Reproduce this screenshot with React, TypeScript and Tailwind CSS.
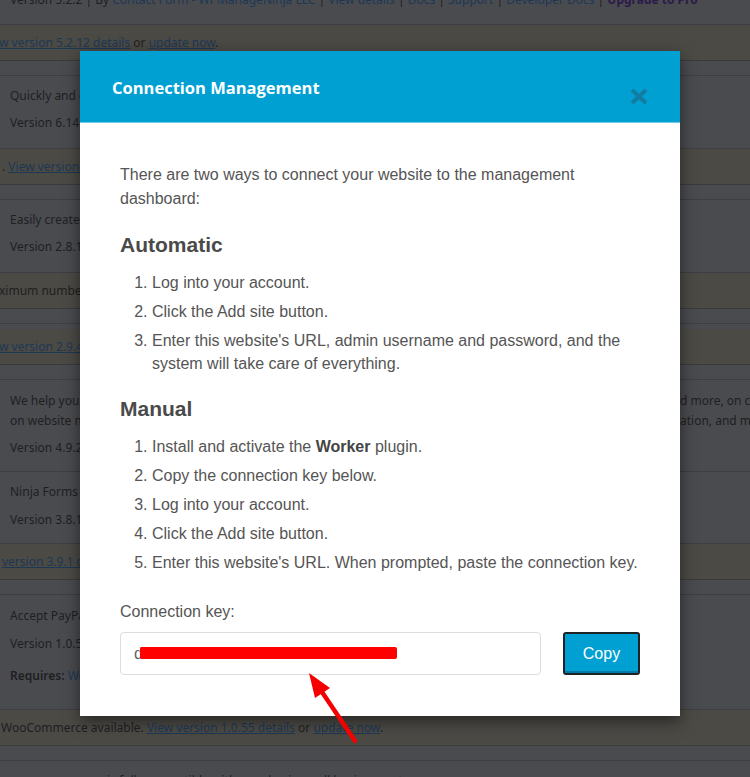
import React from "react";

const linkText = "text-[#1c3855] underline";

function Notice({ children }: { children: React.ReactNode }) {
  return (
    <div className="flex h-[36px] items-center overflow-hidden whitespace-nowrap border-b border-[#3b3b3d] bg-[#4c4a45] text-[#1e1f22]">
      {children}
    </div>
  );
}

function Strip() {
  return <div className="h-[15px] border-b border-[#3d3e41]" />;
}

function PluginRow({
  lines,
  className = "",
}: {
  lines: React.ReactNode[];
  className?: string;
}) {
  return (
    <div className={`border-b border-[#3d3e41] pl-[10px] pt-[10px] ${className}`}>
      {lines.map((line, i) => (
        <div key={i} className="whitespace-nowrap leading-[20px]">
          {line}
        </div>
      ))}
    </div>
  );
}

function CloseIcon() {
  return (
    <svg width="18" height="17" viewBox="0 0 18 17">
      <path d="M2 2 L16 15 M16 2 L2 15" stroke="#137ca3" strokeWidth="4" strokeLinecap="butt" />
    </svg>
  );
}

export default function App() {
  return (
    <div className="relative h-[777px] w-[750px] overflow-hidden bg-[#4a4b4f] font-['Noto_Sans',sans-serif] text-[12px] text-[#1e1f22]">
      {/* dimmed plugin list behind the dialog */}
      <div className="flex flex-col">
        <div className="h-[25px] overflow-hidden whitespace-nowrap border-b border-[#3d3e41] pl-[10px]">
          <div className="-mt-[10px] leading-[20px]">
            Version 5.2.2 | By <span className="text-[#1c3855]">Contact Form - WPManageNinja LLC</span> |{" "}
            <span className="text-[#1c3855]">View details</span> | <span className="text-[#1c3855]">Docs</span> |{" "}
            <span className="text-[#1c3855]">Support</span> | <span className="text-[#1c3855]">Developer Docs</span> |{" "}
            <span className="font-bold text-[#2c1b4a]">Upgrade to Pro</span>
          </div>
        </div>
        <Notice>
          <span className="-ml-[1px]">
            <span className={linkText}>w version 5.2.12 details</span> or <span className={linkText}>update now</span>.
          </span>
        </Notice>
        <Strip />
        <PluginRow
          className="h-[73px]"
          lines={[
            "Quickly and easily create forms with drag and drop builder",
            <span className="mt-[7px] block">Version 6.14 | By Developer | View details</span>,
          ]}
        />
        <Notice>
          <span className="ml-[2px]">
            . <span className={linkText}>View version 6.15 details</span> or <span className={linkText}>update now</span>.
          </span>
        </Notice>
        <Strip />
        <PluginRow
          className="h-[73px]"
          lines={[
            "Easily create tables and charts for your posts",
            <span className="mt-[7px] block">Version 2.8.1 | By Developer | View details</span>,
          ]}
        />
        <Notice>
          <span className="-ml-[1px]">ximum number of sites allowed by your license.</span>
        </Notice>
        <Strip />
        <div className="h-[5px]" />
        <Notice>
          <span className="-ml-[1px]">
            <span className={linkText}>w version 2.9.4 details</span> or <span className={linkText}>update now</span>.
          </span>
        </Notice>
        <Strip />
        <div className="h-[92px] border-b border-[#3d3e41] pl-[10px] pt-[11px]">
          <div className="grid grid-cols-[670px_1fr] whitespace-nowrap leading-[20px]">
            <span className="overflow-hidden">We help you keep your site safe with backups</span>
            <span>d more, on cloud storage of your choice</span>
            <span className="overflow-hidden">on website migration</span>
            <span>ation, and more.</span>
          </div>
          <div className="mt-[7px] leading-[20px]">Version 4.9.2 | By Developer</div>
        </div>
        <PluginRow
          className="h-[72px]"
          lines={[
            "Ninja Forms is a webform builder with unparalleled ease of use",
            <span className="mt-[8px] block">Version 3.8.1 | By Saturday Drive</span>,
          ]}
        />
        <Notice>
          <span className="ml-[2px]">
            <span className={linkText}>version 3.9.1 details</span> or <span className={linkText}>update now</span>.
          </span>
        </Notice>
        <Strip />
        <div className="h-[115px] border-b border-[#3d3e41] pl-[10px] pt-[11px] leading-[20px]">
          <div className="whitespace-nowrap">Accept PayPal payments on your store</div>
          <div className="mt-[8px] whitespace-nowrap">Version 1.0.5 | By Developer</div>
          <div className="mt-[12px] whitespace-nowrap">
            <span className="font-semibold">Requires:</span> <span className="text-[#1c3855]">WooCommerce</span>
          </div>
        </div>
        <Notice>
          <span className="ml-[1px]">
            WooCommerce available. <span className={linkText}>View version 1.0.55 details</span> or{" "}
            <span className={linkText}>update now</span>.
          </span>
        </Notice>
        <Strip />
        <div className="whitespace-nowrap pl-[107px] pt-[10px] leading-[20px]">
          is fully compatible with your basic small business setup
        </div>
      </div>

      {/* dialog */}
      <div className="absolute left-[80px] top-[51px] w-[600px] bg-white shadow-[0_5px_15px_rgba(0,0,0,0.5)]">
        <div className="relative h-[72px] border-b border-[#6fcbe8] bg-[#00a0d2] pl-[32px] pt-[25px]">
          <h2 className="font-['Open_Sans',sans-serif] text-[16.5px] font-bold leading-[24px] text-white">
            Connection Management
          </h2>
          <button type="button" className="absolute right-[32px] top-[37px] flex">
            <CloseIcon />
          </button>
        </div>
        <div className="px-[40px] pb-[41px] pt-[40px] font-['Liberation_Sans',Arial,sans-serif] text-[16px] leading-[24px] text-[#555555]">
          <p>There are two ways to connect your website to the management dashboard:</p>
          <h3 className="mb-[13px] mt-[20px] text-[21px] font-bold leading-[27px] text-[#4a4a4a]">Automatic</h3>
          <ol className="list-decimal space-y-[6px] pl-[32px] leading-[23px]">
            <li>Log into your account.</li>
            <li>Click the Add site button.</li>
            <li>Enter this website's URL, admin username and password, and the system will take care of everything.</li>
          </ol>
          <h3 className="mb-[13px] mt-[20px] text-[21px] font-bold leading-[27px] text-[#4a4a4a]">Manual</h3>
          <ol className="list-decimal space-y-[6px] pl-[32px] leading-[23px]">
            <li>
              Install and activate the <strong className="text-[#444444]">Worker</strong> plugin.
            </li>
            <li>Copy the connection key below.</li>
            <li>Log into your account.</li>
            <li>Click the Add site button.</li>
            <li>Enter this website's URL. When prompted, paste the connection key.</li>
          </ol>
          <div className="mt-[26px]">Connection key:</div>
          <div className="mt-[8px] flex gap-[22px]">
            <div className="relative flex h-[43px] w-[421px] items-center rounded-[4px] border border-[#dddddd] pl-[13px] text-[#666666]">
              d
              <div className="absolute left-[19px] top-[14px] h-[12px] w-[257px] rounded-[2px] bg-[#ff0000]" />
            </div>
            <button
              type="button"
              className="h-[43px] w-[77px] rounded-[3px] border-2 border-[#1d2327] bg-[#00a0d2] text-[16px] text-white shadow-[inset_0_-2px_0_#0079a8]"
            >
              Copy
            </button>
          </div>
        </div>
      </div>

      {/* annotation arrow */}
      <svg className="absolute left-[300px] top-[665px]" width="65" height="85" viewBox="0 0 65 85">
        <line x1="22" y1="27" x2="55" y2="76" stroke="#f50000" strokeWidth="4.5" strokeLinecap="round" />
        <polygon points="9,8 15,33 30,23" fill="#f50000" />
      </svg>
    </div>
  );
}
